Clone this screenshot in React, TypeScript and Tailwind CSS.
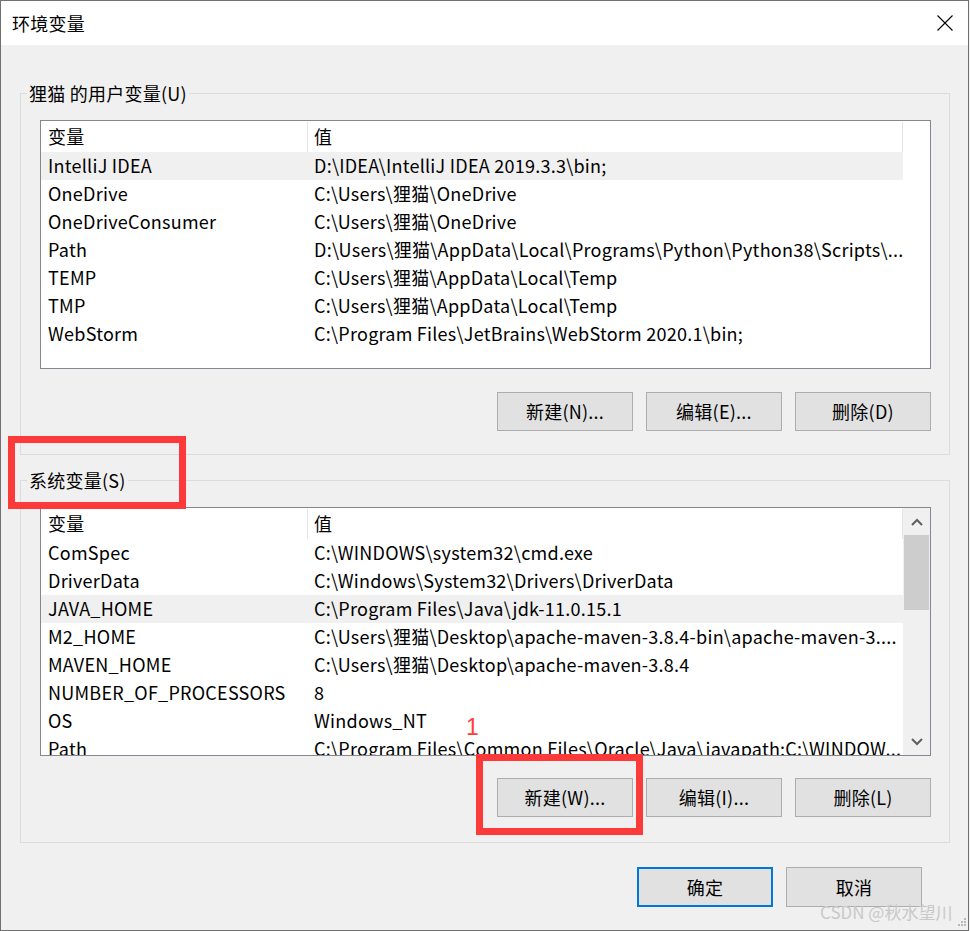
import React from "react";

type Row = { name: string; value: string; sel?: boolean };

const userRows: Row[] = [
  { name: "IntelliJ IDEA", value: "D:\\IDEA\\IntelliJ IDEA 2019.3.3\\bin;", sel: true },
  { name: "OneDrive", value: "C:\\Users\\狸猫\\OneDrive" },
  { name: "OneDriveConsumer", value: "C:\\Users\\狸猫\\OneDrive" },
  { name: "Path", value: "D:\\Users\\狸猫\\AppData\\Local\\Programs\\Python\\Python38\\Scripts\\..." },
  { name: "TEMP", value: "C:\\Users\\狸猫\\AppData\\Local\\Temp" },
  { name: "TMP", value: "C:\\Users\\狸猫\\AppData\\Local\\Temp" },
  { name: "WebStorm", value: "C:\\Program Files\\JetBrains\\WebStorm 2020.1\\bin;" },
];

const sysRows: Row[] = [
  { name: "ComSpec", value: "C:\\WINDOWS\\system32\\cmd.exe" },
  { name: "DriverData", value: "C:\\Windows\\System32\\Drivers\\DriverData" },
  { name: "JAVA_HOME", value: "C:\\Program Files\\Java\\jdk-11.0.15.1", sel: true },
  { name: "M2_HOME", value: "C:\\Users\\狸猫\\Desktop\\apache-maven-3.8.4-bin\\apache-maven-3...." },
  { name: "MAVEN_HOME", value: "C:\\Users\\狸猫\\Desktop\\apache-maven-3.8.4" },
  { name: "NUMBER_OF_PROCESSORS", value: "8" },
  { name: "OS", value: "Windows_NT" },
  { name: "Path", value: "C:\\Program Files\\Common Files\\Oracle\\Java\\javapath;C:\\WINDOW..." },
];

function Scrollbar() {
  return (
    <div className="flex h-full w-[27px] shrink-0 flex-col bg-[#f0f0f0]">
      <div className="flex h-[27px] shrink-0 items-center justify-center">
        <svg width="12" height="8" viewBox="0 0 12 8">
          <polyline points="1,7 6,2 11,7" fill="none" stroke="#606060" strokeWidth="2" />
        </svg>
      </div>
      <div className="mx-[1px] h-[75px] bg-[#cdcdcd]" />
      <div className="flex-1" />
      <div className="flex h-[27px] shrink-0 items-center justify-center">
        <svg width="12" height="8" viewBox="0 0 12 8">
          <polyline points="1,1 6,6 11,1" fill="none" stroke="#606060" strokeWidth="2" />
        </svg>
      </div>
    </div>
  );
}

function ListView({ rows, scroll }: { rows: Row[]; scroll?: boolean }) {
  return (
    <div className="ml-[19px] mt-[26px] flex h-[249px] w-[891px] overflow-hidden border border-[#828790] bg-white">
      <div className="flex w-[862px] shrink-0 flex-col overflow-hidden">
        <div className="flex h-[31px] shrink-0 items-end">
          <div className="flex h-[30px] w-[267px] shrink-0 items-center border-r border-[#e5e5e5] pb-[1px] pl-[7px]">
            变量
          </div>
          <div className="flex h-[30px] flex-1 items-center border-r border-[#e5e5e5] pb-[1px] pl-[6px]">值</div>
        </div>
        {rows.map((r, i) => (
          <div
            key={i}
            className={
              "flex h-[28px] shrink-0 items-center whitespace-nowrap pb-[2px] " +
              (r.sel ? "bg-[#f0f0f0]" : "bg-white")
            }
          >
            <div className="w-[267px] shrink-0 overflow-hidden pl-[7px]">{r.name}</div>
            <div className="flex-1 overflow-hidden pl-[6px]">{r.value}</div>
          </div>
        ))}
      </div>
      {scroll ? <Scrollbar /> : <div className="flex-1 bg-white" />}
    </div>
  );
}

function Btn({ label, primary, tall }: { label: string; primary?: boolean; tall?: boolean }) {
  return (
    <div
      className={
        "flex w-[136px] items-center justify-center bg-[#e1e1e1] " +
        (tall ? "h-[40px] " : "h-[39px] ") +
        (primary ? "border-2 border-[#0078d7]" : "border border-[#adadad]")
      }
    >
      {label}
    </div>
  );
}

function Group({
  label,
  rows,
  scroll,
  buttons,
  mt,
  h,
  btnMt,
}: {
  label: string;
  rows: Row[];
  scroll?: boolean;
  buttons: string[];
  mt: string;
  h: string;
  btnMt: string;
}) {
  return (
    <div className={"relative ml-[19px] w-[930px] border border-[#dcdcdc] " + mt + " " + h}>
      <div className="absolute left-[6px] top-[-15px] bg-[#f0f0f0] px-[2px] leading-[28px]">{label}</div>
      <ListView rows={rows} scroll={scroll} />
      <div className={"mr-[18px] flex justify-end gap-[13px] " + btnMt}>
        {buttons.map((b) => (
          <Btn key={b} label={b} />
        ))}
      </div>
    </div>
  );
}

export default function App() {
  return (
    <div className="relative h-[931px] w-[970px] overflow-hidden bg-[#f0f0f0] font-['Noto_Sans_CJK_SC','Noto_Sans',sans-serif] text-[18px] tracking-[0.25px] text-black">
      <div className="flex h-[931px] w-[969px] flex-col border border-[#707070] bg-[#f0f0f0]">
        <div className="flex h-[44px] shrink-0 items-center justify-between bg-white pl-[11px] pr-[15px]">
          <span>环境变量</span>
          <svg width="16" height="16" viewBox="0 0 16 16">
            <path d="M0.5 0.5 L15.5 15.5 M15.5 0.5 L0.5 15.5" stroke="#000" strokeWidth="1.1" fill="none" />
          </svg>
        </div>
        <Group
          label="狸猫 的用户变量(U)"
          rows={userRows}
          buttons={["新建(N)...", "编辑(E)...", "删除(D)"]}
          mt="mt-[48px]"
          h="h-[362px]"
          btnMt="mt-[23px]"
        />
        <Group
          label="系统变量(S)"
          rows={sysRows}
          scroll
          buttons={["新建(W)...", "编辑(I)...", "删除(L)"]}
          mt="mt-[25px]"
          h="h-[363px]"
          btnMt="mt-[22px]"
        />
        <div className="mr-[46px] mt-[24px] flex justify-end gap-[13px]">
          <Btn label="确定" primary tall />
          <Btn label="取消" tall />
        </div>
      </div>

      {/* annotations */}
      <div className="absolute left-[8px] top-[436px] h-[73px] w-[178px] border-[7px] border-[#fc3a3a]" />
      <div className="absolute left-[476px] top-[754px] h-[81px] w-[167px] border-[7px] border-[#fc3a3a]" />
      <div className="absolute left-[466px] top-[716px] font-['Liberation_Sans',sans-serif] text-[23px] leading-none text-[#ff3b3b]">
        1
      </div>

      {/* watermark */}
      <div className="absolute left-[820px] top-[900px] text-[17px] font-normal leading-[24px] tracking-normal text-[#c8c8c8]">
        CSDN @秋水望川
      </div>
      <svg className="absolute left-[957px] top-[917px]" width="10" height="10" viewBox="0 0 10 10">
        <rect x="7" y="1" width="2" height="2" fill="#b8b8b8" />
        <rect x="4" y="4" width="2" height="2" fill="#b8b8b8" />
        <rect x="7" y="4" width="2" height="2" fill="#b8b8b8" />
        <rect x="1" y="7" width="2" height="2" fill="#b8b8b8" />
        <rect x="4" y="7" width="2" height="2" fill="#b8b8b8" />
        <rect x="7" y="7" width="2" height="2" fill="#b8b8b8" />
      </svg>
    </div>
  );
}
